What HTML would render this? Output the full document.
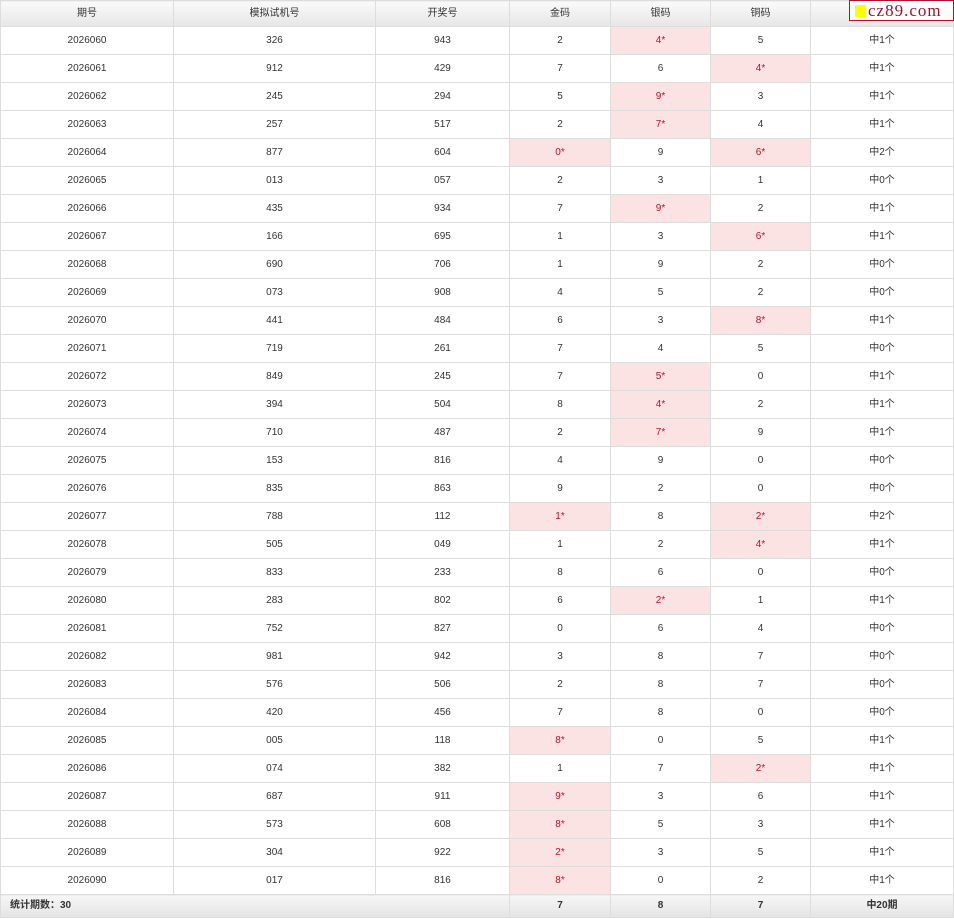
<!DOCTYPE html>
<html><head><meta charset="utf-8">
<style>
body{margin:0;background:#fff;font-family:"Liberation Sans","Noto Sans CJK SC",sans-serif;font-size:10px;color:#333;}
table{position:absolute;left:0;top:0;border-collapse:collapse;table-layout:fixed;width:953px;}
td,th{border:1px solid #ddd;text-align:center;padding:0;height:27px;line-height:12px;vertical-align:middle;overflow:hidden;white-space:nowrap;}
th{height:25px;font-weight:normal;background:linear-gradient(#fafafa,#e6e6e6);color:#333;}
td.h{background:#fbe3e4;color:#c0102a;}
tr.f td{height:22px;background:linear-gradient(#f6f6f6,#e4e4e4);font-weight:bold;}
.logo{position:absolute;left:849px;top:0;width:103px;height:19px;border:1px solid #b0102a;background:#fff;font-family:"Liberation Serif",serif;font-size:17px;color:#a0102a;line-height:19px;letter-spacing:1px;}
.logo i{display:inline-block;width:11px;height:12px;background:#ffff00;margin:0 2px 0 5px;vertical-align:-1px;}
</style></head><body>
<table>
<colgroup><col style="width:173px"><col style="width:202px"><col style="width:134px"><col style="width:101px"><col style="width:100px"><col style="width:100px"><col style="width:143px"></colgroup>
<tr><th>期号</th><th>模拟试机号</th><th>开奖号</th><th>金码</th><th>银码</th><th>铜码</th><th></th></tr>
<tr><td>2026060</td><td>326</td><td>943</td><td>2</td><td class="h">4*</td><td>5</td><td>中1个</td></tr>
<tr><td>2026061</td><td>912</td><td>429</td><td>7</td><td>6</td><td class="h">4*</td><td>中1个</td></tr>
<tr><td>2026062</td><td>245</td><td>294</td><td>5</td><td class="h">9*</td><td>3</td><td>中1个</td></tr>
<tr><td>2026063</td><td>257</td><td>517</td><td>2</td><td class="h">7*</td><td>4</td><td>中1个</td></tr>
<tr><td>2026064</td><td>877</td><td>604</td><td class="h">0*</td><td>9</td><td class="h">6*</td><td>中2个</td></tr>
<tr><td>2026065</td><td>013</td><td>057</td><td>2</td><td>3</td><td>1</td><td>中0个</td></tr>
<tr><td>2026066</td><td>435</td><td>934</td><td>7</td><td class="h">9*</td><td>2</td><td>中1个</td></tr>
<tr><td>2026067</td><td>166</td><td>695</td><td>1</td><td>3</td><td class="h">6*</td><td>中1个</td></tr>
<tr><td>2026068</td><td>690</td><td>706</td><td>1</td><td>9</td><td>2</td><td>中0个</td></tr>
<tr><td>2026069</td><td>073</td><td>908</td><td>4</td><td>5</td><td>2</td><td>中0个</td></tr>
<tr><td>2026070</td><td>441</td><td>484</td><td>6</td><td>3</td><td class="h">8*</td><td>中1个</td></tr>
<tr><td>2026071</td><td>719</td><td>261</td><td>7</td><td>4</td><td>5</td><td>中0个</td></tr>
<tr><td>2026072</td><td>849</td><td>245</td><td>7</td><td class="h">5*</td><td>0</td><td>中1个</td></tr>
<tr><td>2026073</td><td>394</td><td>504</td><td>8</td><td class="h">4*</td><td>2</td><td>中1个</td></tr>
<tr><td>2026074</td><td>710</td><td>487</td><td>2</td><td class="h">7*</td><td>9</td><td>中1个</td></tr>
<tr><td>2026075</td><td>153</td><td>816</td><td>4</td><td>9</td><td>0</td><td>中0个</td></tr>
<tr><td>2026076</td><td>835</td><td>863</td><td>9</td><td>2</td><td>0</td><td>中0个</td></tr>
<tr><td>2026077</td><td>788</td><td>112</td><td class="h">1*</td><td>8</td><td class="h">2*</td><td>中2个</td></tr>
<tr><td>2026078</td><td>505</td><td>049</td><td>1</td><td>2</td><td class="h">4*</td><td>中1个</td></tr>
<tr><td>2026079</td><td>833</td><td>233</td><td>8</td><td>6</td><td>0</td><td>中0个</td></tr>
<tr><td>2026080</td><td>283</td><td>802</td><td>6</td><td class="h">2*</td><td>1</td><td>中1个</td></tr>
<tr><td>2026081</td><td>752</td><td>827</td><td>0</td><td>6</td><td>4</td><td>中0个</td></tr>
<tr><td>2026082</td><td>981</td><td>942</td><td>3</td><td>8</td><td>7</td><td>中0个</td></tr>
<tr><td>2026083</td><td>576</td><td>506</td><td>2</td><td>8</td><td>7</td><td>中0个</td></tr>
<tr><td>2026084</td><td>420</td><td>456</td><td>7</td><td>8</td><td>0</td><td>中0个</td></tr>
<tr><td>2026085</td><td>005</td><td>118</td><td class="h">8*</td><td>0</td><td>5</td><td>中1个</td></tr>
<tr><td>2026086</td><td>074</td><td>382</td><td>1</td><td>7</td><td class="h">2*</td><td>中1个</td></tr>
<tr><td>2026087</td><td>687</td><td>911</td><td class="h">9*</td><td>3</td><td>6</td><td>中1个</td></tr>
<tr><td>2026088</td><td>573</td><td>608</td><td class="h">8*</td><td>5</td><td>3</td><td>中1个</td></tr>
<tr><td>2026089</td><td>304</td><td>922</td><td class="h">2*</td><td>3</td><td>5</td><td>中1个</td></tr>
<tr><td>2026090</td><td>017</td><td>816</td><td class="h">8*</td><td>0</td><td>2</td><td>中1个</td></tr>
<tr class="f"><td colspan="3" style="text-align:left;padding-left:9px">统计期数：30</td><td>7</td><td>8</td><td>7</td><td>中20期</td></tr>
</table>
<div class="logo"><i></i>cz89.com</div>
</body></html>
